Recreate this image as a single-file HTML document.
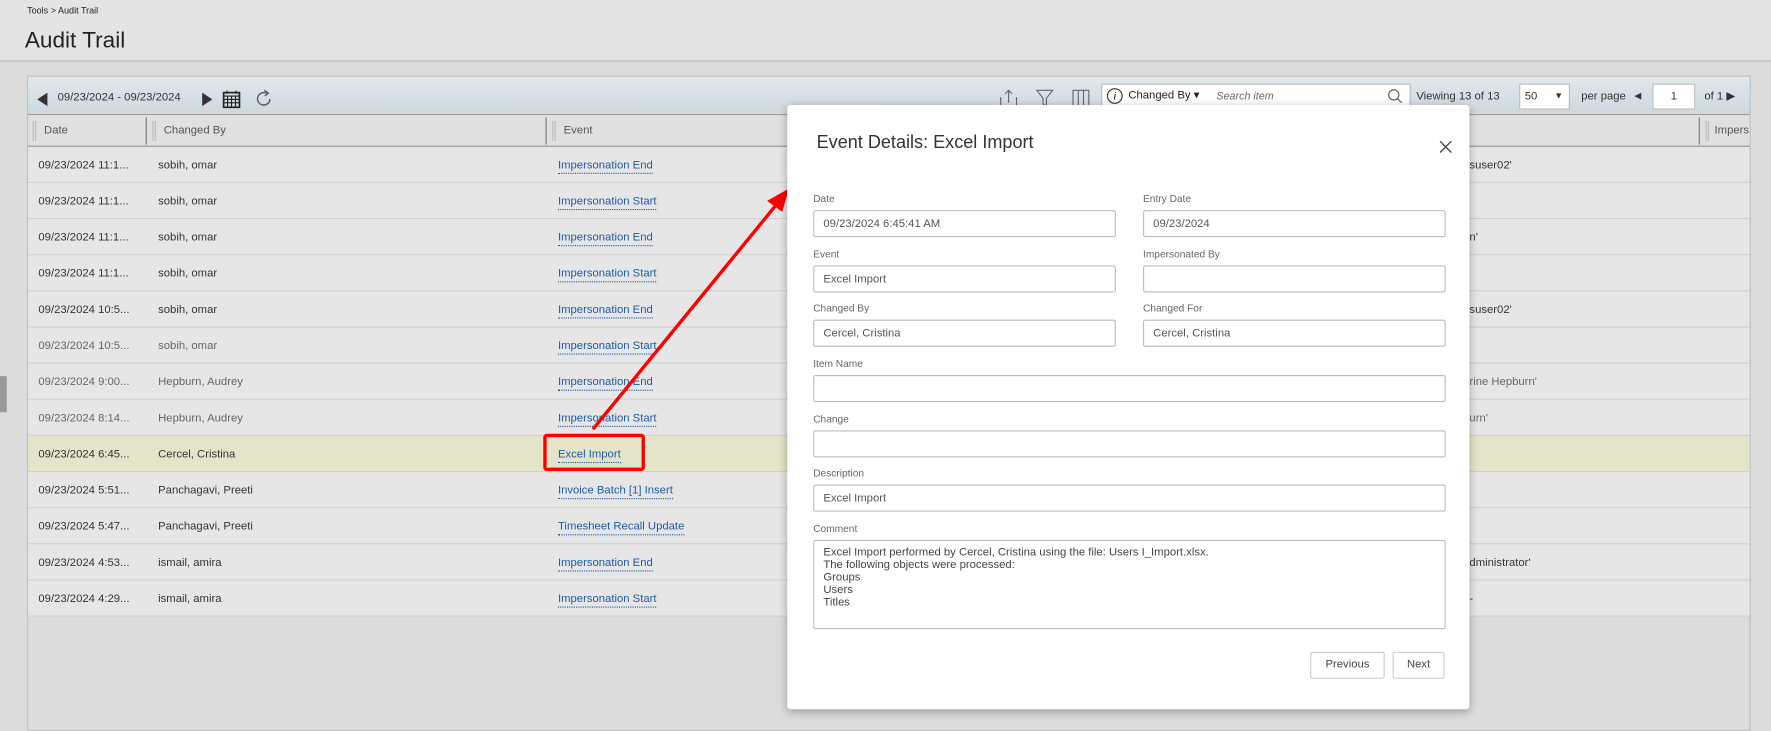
<!DOCTYPE html>
<html><head><meta charset="utf-8"><style>
*{box-sizing:border-box;margin:0;padding:0}
body{width:1771px;height:724px;overflow:hidden;background:#dcdcdc;font-family:"Liberation Sans",sans-serif}
#w{position:absolute;left:0;top:0;width:1568px;height:641px;transform:scale(1.12946);transform-origin:0 0;background:#dcdcdc}
.a{position:absolute}
.hdr{left:0;top:0;width:1568px;height:55px;background:#e4e4e4;border-bottom:2px solid #c8c8c8}
.panel{left:24px;top:67px;width:1526px;height:580px;border:1px solid #bfbfbf;background:#dcdcdc}
.tb{left:0;top:0;width:1524px;height:34px;background:linear-gradient(#e2e8ec,#cdd8de);border-bottom:1px solid #9a9a9a}
.th{left:0;top:34px;width:1524px;height:28px;background:#e0e0e0;border-bottom:1px solid #8a8a8a;font-size:10px;color:#555}
.row{left:0;width:1524px;height:32px;background:#e6e6e6;border-bottom:1px solid #d0d0d0;font-size:10px;color:#333}
.row span{position:absolute;top:11px;white-space:nowrap}
.lk{color:#1f5aa6;border-bottom:1px dotted #1f5aa6;padding-bottom:1px}
.g{color:#666}
.dlg{left:697px;top:93px;width:604px;height:535px;background:#fff;border-radius:3px;box-shadow:0 2px 8px rgba(0,0,0,.3)}
.lb{position:absolute;font-size:9px;color:#666}
.in{position:absolute;height:24px;border:1px solid #bbb;border-radius:2px;font-size:10px;color:#555;padding:6px 8px;white-space:nowrap}
.btn{position:absolute;height:24px;border:1px solid #ccc;border-radius:2px;font-size:10px;color:#444;text-align:center;line-height:22px;background:#fff}
</style></head><body><div id="w">
<div class="a hdr"><div class="a" style="left:24px;top:5px;font-size:8px;color:#222">Tools &gt; Audit Trail</div>
<div class="a" style="left:22px;top:25px;font-size:20px;color:#222">Audit Trail</div></div>
<div class="a" style="left:0;top:333px;width:6px;height:32px;background:#999"></div>
<div class="a panel">
<div class="a tb">
<div class="a" style="left:8px;top:14px;width:0;height:0;border-top:6px solid transparent;border-bottom:6px solid transparent;border-right:9px solid #333"></div>
<div class="a" style="left:26px;top:13px;font-size:10px;color:#333">09/23/2024 - 09/23/2024</div>
<div class="a" style="left:154px;top:14px;width:0;height:0;border-top:6px solid transparent;border-bottom:6px solid transparent;border-left:9px solid #333"></div>
<svg class="a" style="left:172px;top:12px" width="16" height="16"><rect x="1" y="2" width="14" height="13" fill="none" stroke="#222" stroke-width="1.5"/><path d="M1 5H15M1 8H15M1 11H15M4.5 5V15M8 5V15M11.5 5V15M4 0V3M12 0V3" stroke="#222"/></svg>
<svg class="a" style="left:200px;top:11px" width="17" height="17"><path d="M14 8.5A5.5 5.5 0 1 1 11 3.6" fill="none" stroke="#555" stroke-width="1.2"/><path d="M9 1L12.5 3.5L9.5 6" fill="none" stroke="#555" stroke-width="1.2"/></svg>
<svg class="a" style="left:860px;top:10px" width="16" height="18"><path d="M1 8V17H15V8M8 13V2M5 5L8 2L11 5" fill="none" stroke="#666"/></svg>
<svg class="a" style="left:892px;top:10px" width="16" height="18"><path d="M1 2H15L9.5 9V16L6.5 14V9Z" fill="none" stroke="#666"/></svg>
<svg class="a" style="left:924px;top:10px" width="16" height="18"><rect x="1" y="2" width="14" height="15" fill="none" stroke="#666"/><path d="M5.7 2V17M10.3 2V17" stroke="#666"/></svg>
<div class="a" style="left:950px;top:6px;width:274px;height:22px;background:#fff;border:1px solid #bbb;border-radius:2px">
<div class="a" style="left:4px;top:3px;width:14px;height:14px;border:1.3px solid #333;border-radius:50%;font-size:9px;text-align:center;line-height:12px;font-style:italic">i</div>
<div class="a" style="left:23px;top:4px;font-size:10px;color:#222">Changed By ▾</div>
<div class="a" style="left:101px;top:5px;font-size:9.5px;color:#666;font-style:italic">Search item</div>
<svg class="a" style="left:252px;top:3px" width="14" height="14"><circle cx="6" cy="6" r="4.5" fill="none" stroke="#555"/><path d="M9.3 9.3L13 13" stroke="#555"/></svg></div>
<div class="a" style="left:1229px;top:12px;font-size:10px;color:#333">Viewing 13 of 13</div>
<div class="a" style="left:1320px;top:6px;width:45px;height:23px;background:#fff;border:1px solid #bbb;font-size:10px;padding:5px 4px;color:#333">50<span style="position:absolute;right:5px;top:5px;font-size:8px">▼</span></div>
<div class="a" style="left:1375px;top:12px;font-size:10px;color:#333">per page</div>
<div class="a" style="left:1422px;top:12px;font-size:8px;color:#333">◀</div>
<div class="a" style="left:1438px;top:6px;width:38px;height:23px;background:#fff;border:1px solid #bbb;font-size:10px;text-align:center;line-height:21px;color:#333">1</div>
<div class="a" style="left:1484px;top:12px;font-size:10px;color:#333">of 1 ▶</div>
</div>
<div class="a th">
<span class="a" style="left:4px;top:5px;height:18px;border-left:3px double #bbb"></span><span class="a" style="left:14px;top:8px">Date</span>
<span class="a" style="left:104px;top:2px;height:24px;border-left:1px solid #777"></span>
<span class="a" style="left:110px;top:5px;height:18px;border-left:3px double #bbb"></span><span class="a" style="left:120px;top:8px">Changed By</span>
<span class="a" style="left:458px;top:2px;height:24px;border-left:1px solid #777"></span>
<span class="a" style="left:464px;top:5px;height:18px;border-left:3px double #bbb"></span><span class="a" style="left:474px;top:8px">Event</span>
<span class="a" style="left:1479px;top:2px;height:24px;border-left:1px solid #777"></span>
<span class="a" style="left:1485px;top:5px;height:18px;border-left:3px double #bbb"></span><span class="a" style="left:1493px;top:8px">Impers</span>
</div>
<div class="a row" style="top:62px"><span style="left:9px">09/23/2024 11:1...</span><span style="left:115px">sobih, omar</span><span class="lk" style="left:469px">Impersonation End</span><span style="left:1276px">suser02'</span></div>
<div class="a row" style="top:94px"><span style="left:9px">09/23/2024 11:1...</span><span style="left:115px">sobih, omar</span><span class="lk" style="left:469px">Impersonation Start</span></div>
<div class="a row" style="top:126px"><span style="left:9px">09/23/2024 11:1...</span><span style="left:115px">sobih, omar</span><span class="lk" style="left:469px">Impersonation End</span><span style="left:1276px">n'</span></div>
<div class="a row" style="top:158px"><span style="left:9px">09/23/2024 11:1...</span><span style="left:115px">sobih, omar</span><span class="lk" style="left:469px">Impersonation Start</span></div>
<div class="a row" style="top:190px"><span style="left:9px">09/23/2024 10:5...</span><span style="left:115px">sobih, omar</span><span class="lk" style="left:469px">Impersonation End</span><span style="left:1276px">suser02'</span></div>
<div class="a row g" style="top:222px"><span style="left:9px">09/23/2024 10:5...</span><span style="left:115px">sobih, omar</span><span class="lk" style="left:469px">Impersonation Start</span></div>
<div class="a row g" style="top:254px"><span style="left:9px">09/23/2024 9:00...</span><span style="left:115px">Hepburn, Audrey</span><span class="lk" style="left:469px">Impersonation End</span><span style="left:1276px">rine Hepburn'</span></div>
<div class="a row g" style="top:286px"><span style="left:9px">09/23/2024 8:14...</span><span style="left:115px">Hepburn, Audrey</span><span class="lk" style="left:469px">Impersonation Start</span><span style="left:1276px">urn'</span></div>
<div class="a row" style="top:318px;background:#e4e4c8"><span style="left:9px">09/23/2024 6:45...</span><span style="left:115px">Cercel, Cristina</span><span class="lk" style="left:469px">Excel Import</span></div>
<div class="a row" style="top:350px"><span style="left:9px">09/23/2024 5:51...</span><span style="left:115px">Panchagavi, Preeti</span><span class="lk" style="left:469px">Invoice Batch [1] Insert</span></div>
<div class="a row" style="top:382px"><span style="left:9px">09/23/2024 5:47...</span><span style="left:115px">Panchagavi, Preeti</span><span class="lk" style="left:469px">Timesheet Recall Update</span></div>
<div class="a row" style="top:414px"><span style="left:9px">09/23/2024 4:53...</span><span style="left:115px">ismail, amira</span><span class="lk" style="left:469px">Impersonation End</span><span style="left:1276px">dministrator'</span></div>
<div class="a row" style="top:446px"><span style="left:9px">09/23/2024 4:29...</span><span style="left:115px">ismail, amira</span><span class="lk" style="left:469px">Impersonation Start</span><span style="left:1276px">-</span></div>
</div>
<div class="a" style="left:481px;top:384px;width:90px;height:33px;border:3px solid #f00;border-radius:3px"></div>
<svg class="a" style="left:0;top:0" width="1568" height="641"><path d="M525 380L690 178" stroke="#f00" stroke-width="3"/><path d="M697 169L681 178L692 186Z" fill="#f00" stroke="#f00" stroke-width="2"/></svg>
<div class="a dlg">
<div class="a" style="left:26px;top:25px;font-size:16px;color:#333">Event Details: Excel Import</div>
<svg class="a" style="left:577px;top:31px" width="12" height="12"><path d="M1 1L11 11M11 1L1 11" stroke="#444" stroke-width="1.2"/></svg>
<div class="lb" style="left:23px;top:78px">Date</div><div class="in" style="left:23px;top:93px;width:268px">09/23/2024 6:45:41 AM</div>
<div class="lb" style="left:315px;top:78px">Entry Date</div><div class="in" style="left:315px;top:93px;width:268px">09/23/2024</div>
<div class="lb" style="left:23px;top:127px">Event</div><div class="in" style="left:23px;top:142px;width:268px">Excel Import</div>
<div class="lb" style="left:315px;top:127px">Impersonated By</div><div class="in" style="left:315px;top:142px;width:268px"></div>
<div class="lb" style="left:23px;top:175px">Changed By</div><div class="in" style="left:23px;top:190px;width:268px">Cercel, Cristina</div>
<div class="lb" style="left:315px;top:175px">Changed For</div><div class="in" style="left:315px;top:190px;width:268px">Cercel, Cristina</div>
<div class="lb" style="left:23px;top:224px">Item Name</div><div class="in" style="left:23px;top:239px;width:560px"></div>
<div class="lb" style="left:23px;top:273px">Change</div><div class="in" style="left:23px;top:288px;width:560px"></div>
<div class="lb" style="left:23px;top:321px">Description</div><div class="in" style="left:23px;top:336px;width:560px">Excel Import</div>
<div class="lb" style="left:23px;top:370px">Comment</div><div class="in" style="left:23px;top:385px;width:560px;height:79px;padding:5px 8px;line-height:11px;white-space:pre;color:#444">Excel Import performed by Cercel, Cristina using the file: Users I_Import.xlsx.
The following objects were processed:
Groups
Users
Titles</div>
<div class="btn" style="left:463px;top:484px;width:66px">Previous</div>
<div class="btn" style="left:536px;top:484px;width:46px">Next</div>
</div>
</div></body></html>
